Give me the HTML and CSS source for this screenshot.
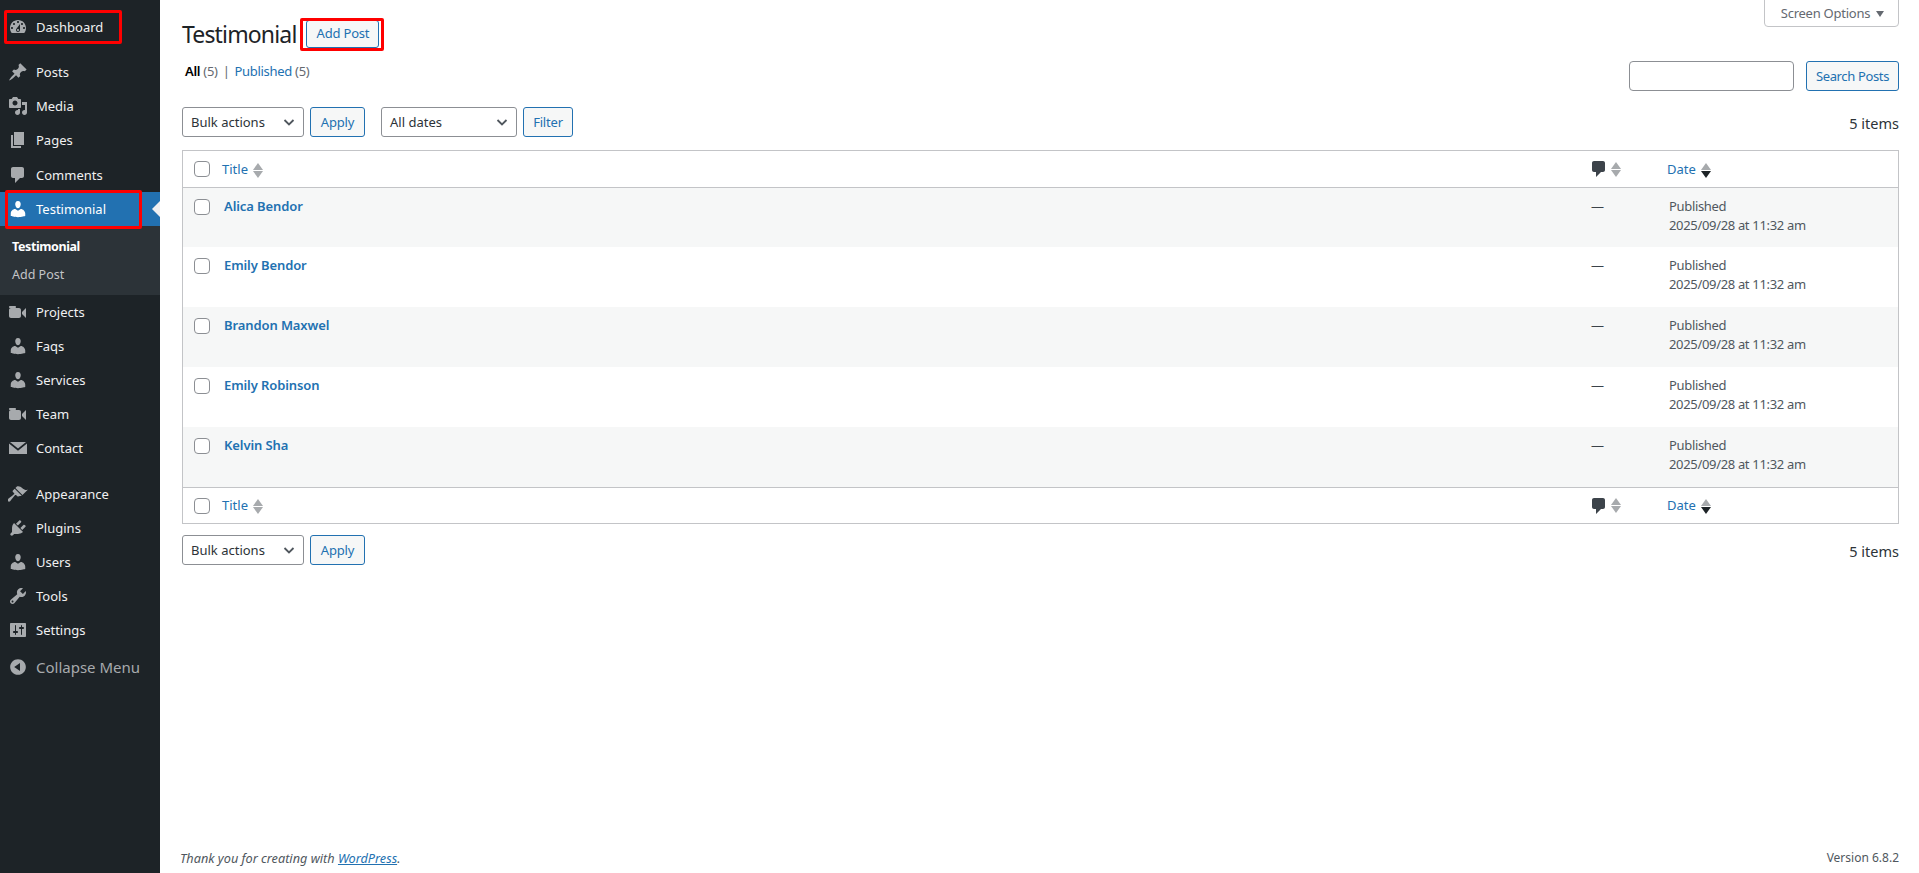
FILE: index.html
```html
<!DOCTYPE html>
<html lang="en">
<head>
  <meta charset="UTF-8">
  <title>Testimonial</title>
  <link rel="stylesheet" href="styles.css">
</head>
<body>

  <svg class="sprites" xmlns="http://www.w3.org/2000/svg">
    <symbol id="i-dashboard" viewBox="0 0 20 20"><path fill-rule="evenodd" d="M3.76 16h12.48c1.1-1.37 1.76-3.11 1.76-5 0-4.42-3.58-8-8-8s-8 3.58-8 8c0 1.89.66 3.63 1.76 5zM10 4c.55 0 1 .45 1 1s-.45 1-1 1-1-.45-1-1 .45-1 1-1zM6 6c.55 0 1 .45 1 1s-.45 1-1 1-1-.45-1-1 .45-1 1-1zm8 0c.55 0 1 .45 1 1s-.45 1-1 1-1-.45-1-1 .45-1 1-1zm-5.37 5.55L12 7v6c0 1.1-.9 2-2 2s-2-.9-2-2c0-.57.24-1.08.63-1.45zM4 10c.55 0 1 .45 1 1s-.45 1-1 1-1-.45-1-1 .45-1 1-1zm12 0c.55 0 1 .45 1 1s-.45 1-1 1-1-.45-1-1 .45-1 1-1zm-5 3c0-.55-.45-1-1-1s-1 .45-1 1 .45 1 1 1 1-.45 1-1z"/></symbol>
    <symbol id="i-post" viewBox="0 0 20 20"><path d="M10.44 3.02l1.82-1.82 6.36 6.35-1.83 1.82c-1.05-.68-2.48-.57-3.41.36l-.75.75c-.92.93-1.04 2.35-.35 3.41l-1.83 1.82-2.41-2.41-2.8 2.79c-.42.42-3.38 2.71-3.8 2.29s1.86-3.39 2.28-3.81l2.79-2.79L4.1 9.36l1.83-1.82c1.05.69 2.48.57 3.4-.36l.75-.75c.93-.92 1.05-2.35.36-3.41z"/></symbol>
    <symbol id="i-media" viewBox="0 0 20 20"><path fill-rule="evenodd" d="M13 11V4c0-.55-.45-1-1-1h-1.67L9 1H5L3.67 3H2c-.55 0-1 .45-1 1v7c0 .55.45 1 1 1h10c.55 0 1-.45 1-1zM7 4.5c1.38 0 2.5 1.12 2.5 2.5S8.38 9.5 7 9.5 4.5 8.38 4.5 7 5.62 4.5 7 4.5zM14 6h5v10.5c0 1.38-1.12 2.5-2.5 2.5S14 17.88 14 16.5s1.12-2.5 2.5-2.5c.17 0 .34.02.5.05V9h-3V6zm-4 8.05V13h2v3.5c0 1.38-1.12 2.5-2.5 2.5S7 17.88 7 16.5 8.12 14 9.5 14c.17 0 .34.02.5.05z"/></symbol>
    <symbol id="i-page" viewBox="0 0 20 20"><path d="M6 15V2h10v13H6zm-1 1h8v2H3V5h2v11z"/></symbol>
    <symbol id="i-comment" viewBox="0 0 20 20"><path d="M5 2h9c1.1 0 2 .9 2 2v7c0 1.1-.9 2-2 2h-2l-5 5v-5H5c-1.1 0-2-.9-2-2V4c0-1.1.9-2 2-2z"/></symbol>
    <symbol id="i-user" viewBox="0 0 20 20"><path d="M10 9.25c-2.27 0-2.73-3.44-2.73-3.44C7 4.02 7.82 2 9.97 2c2.16 0 2.98 2.02 2.71 3.81 0 0-.41 3.44-2.68 3.44zm0 2.57L12.72 10c2.39 0 4.52 2.33 4.52 4.53v2.49s-3.65 1.13-7.24 1.13c-3.65 0-7.24-1.13-7.24-1.13v-2.49c0-2.25 1.94-4.48 4.47-4.48z"/></symbol>
    <symbol id="i-video" viewBox="0 0 20 20"><path d="M8 5c0-.55-.45-1-1-1H2c-.55 0-1 .45-1 1 0 .57.49 1 1 1h5c.55 0 1-.45 1-1zm6 5l4-4v10l-4-4v-2zm-1 4V8c0-1.1-.9-2-2-2H3c-1.1 0-2 .9-2 2v6c0 1.1.9 2 2 2h8c1.1 0 2-.9 2-2z"/></symbol>
    <symbol id="i-email" viewBox="0 0 20 20"><path d="M2 4h16l-8 6.5zM1 5.500l9 7.2 9-7.2V16H1z"/></symbol>
    <symbol id="i-appearance" viewBox="0 0 20 20"><path d="M14.48 11.06L7.41 3.99l1.5-1.5c.5-.56 2.3-.47 3.51.32 1.21.8 1.43 1.28 2.91 2.1 1.18.64 2.45 1.26 4.45.85zm-.71.71L6.7 4.7 4.93 6.47c-.39.39-.39 1.02 0 1.41l1.06 1.06c.39.39.39 1.03 0 1.42-.6.6-6.01 4.79-6.01 4.79-.59.59-.59 1.54 0 2.12.59.59 1.54.59 2.12 0 0 0 4.19-5.41 4.79-6.01.39-.39 1.03-.39 1.42 0l1.06 1.06c.39.39 1.02.39 1.41 0z"/></symbol>
    <symbol id="i-plugin" viewBox="0 0 20 20"><path d="M13.11 4.36L9.87 7.6 8 5.73l3.24-3.24c.35-.34 1.05-.2 1.56.32.52.51.66 1.21.31 1.55zm-8 1.77l.91-1.12 9.01 9.01-1.19.84c-.71.71-2.63 1.16-3.82 1.16H6.14L4.9 17.26c-.59.59-1.54.59-2.12 0-.59-.58-.59-1.53 0-2.12l1.24-1.24v-3.88c0-1.13.4-3.19 1.09-3.89zm7.26 3.97l3.24-3.24c.34-.35 1.04-.21 1.55.31.52.51.66 1.21.31 1.55l-3.24 3.25z"/></symbol>
    <symbol id="i-tools" viewBox="0 0 20 20"><path fill-rule="evenodd" d="M16.68 9.77c-1.34 1.34-3.3 1.67-4.95.99l-5.41 6.52c-.99.99-2.59.99-3.58 0s-.99-2.59 0-3.57l6.52-5.42c-.68-1.65-.35-3.61.99-4.95 1.28-1.28 3.12-1.62 4.72-1.06l-2.89 2.89 2.82 2.82 2.86-2.87c.53 1.58.18 3.39-1.08 4.65zM3.81 16.21c.4.39 1.04.39 1.43 0 .4-.4.4-1.04 0-1.43-.39-.4-1.03-.4-1.43 0-.39.39-.39 1.03 0 1.43z"/></symbol>
    <symbol id="i-settings" viewBox="0 0 20 20"><path fill-rule="evenodd" d="M18 16V4c0-.55-.45-1-1-1H3c-.55 0-1 .45-1 1v12c0 .55.45 1 1 1h14c.55 0 1-.45 1-1zM8 11h1c.55 0 1 .45 1 1s-.45 1-1 1H8v1.5c0 .28-.22.5-.5.5s-.5-.22-.5-.5V13H6c-.55 0-1-.45-1-1s.45-1 1-1h1V5.5c0-.28.22-.5.5-.5s.5.22.5.5V11zm5-2h-1c-.55 0-1-.45-1-1s.45-1 1-1h1V5.500c0-.28.22-.5.5-.5s.5.22.5.5V7h1c.55 0 1 .45 1 1s-.45 1-1 1h-1v5.500c0 .28-.22.5-.5.5s-.5-.22-.5-.5V9z"/></symbol>
    <symbol id="i-collapse" viewBox="0 0 20 20"><path fill-rule="evenodd" d="M10 2.16c4.33 0 7.84 3.51 7.84 7.84s-3.51 7.84-7.84 7.84S2.16 14.33 2.16 10 5.71 2.16 10 2.16zm2 11.72V6.12L6.18 9.97z"/></symbol>
  </svg>

  <div class="wrap">
    <nav class="sidebar">
      <div class="red-box red-dash"></div>
      <div class="red-box red-test"></div>
      <ul class="menu">
        <li class="item"><svg class="icon"><use href="#i-dashboard"/></svg>Dashboard</li>
        <li class="sep"></li>
        <li class="item"><svg class="icon"><use href="#i-post"/></svg>Posts</li>
        <li class="item"><svg class="icon"><use href="#i-media"/></svg>Media</li>
        <li class="item"><svg class="icon"><use href="#i-page"/></svg>Pages</li>
        <li class="item"><svg class="icon"><use href="#i-comment"/></svg>Comments</li>
        <li class="item active"><svg class="icon"><use href="#i-user"/></svg>Testimonial</li>
        <li class="submenu">
          <div class="sub-item current">Testimonial</div>
          <div class="sub-item">Add Post</div>
        </li>
        <li class="item"><svg class="icon"><use href="#i-video"/></svg>Projects</li>
        <li class="item"><svg class="icon"><use href="#i-user"/></svg>Faqs</li>
        <li class="item"><svg class="icon"><use href="#i-user"/></svg>Services</li>
        <li class="item"><svg class="icon"><use href="#i-video"/></svg>Team</li>
        <li class="item"><svg class="icon"><use href="#i-email"/></svg>Contact</li>
        <li class="sep"></li>
        <li class="item"><svg class="icon"><use href="#i-appearance"/></svg>Appearance</li>
        <li class="item"><svg class="icon"><use href="#i-plugin"/></svg>Plugins</li>
        <li class="item"><svg class="icon"><use href="#i-user"/></svg>Users</li>
        <li class="item"><svg class="icon"><use href="#i-tools"/></svg>Tools</li>
        <li class="item"><svg class="icon"><use href="#i-settings"/></svg>Settings</li>
        <li class="item collapse"><svg class="icon"><use href="#i-collapse"/></svg>Collapse Menu</li>
      </ul>
    </nav>

    <main class="content">
      <button class="screen-options">Screen Options<span class="down"></span></button>

      <div class="heading">
        <h1>Testimonial</h1>
        <div class="add-wrap">
          <button class="btn add-btn">Add Post</button>
          <div class="red-box red-add"></div>
        </div>
      </div>

      <div class="filter-row">
        <ul class="views">
          <li><b>All</b> <span class="count">(5)</span></li>
          <li class="bar">|</li>
          <li><a href="#">Published</a> <span class="count">(5)</span></li>
        </ul>
        <div class="search">
          <input type="text" class="search-input">
          <button class="btn search-btn">Search Posts</button>
        </div>
      </div>

      <div class="tablenav top">
        <div class="select select-bulk">Bulk actions<svg class="chev" viewBox="0 0 12 8"><path d="M1.5 2l4.5 4.5L10.500 2"/></svg></div>
        <button class="btn apply">Apply</button>
        <div class="select select-dates">All dates<svg class="chev" viewBox="0 0 12 8"><path d="M1.5 2l4.5 4.5L10.500 2"/></svg></div>
        <button class="btn filter">Filter</button>
        <span class="items">5 items</span>
      </div>

      <table class="posts">
        <colgroup>
          <col class="col-check"><col><col class="col-comments"><col class="col-date">
        </colgroup>
        <thead>
          <tr>
            <th><span class="check"></span></th>
            <th class="title-head"><a href="#">Title</a><span class="sort"><i class="up"></i><i class="dn"></i></span></th>
            <th><svg class="comment-head"><use href="#i-comment"/></svg><span class="sort"><i class="up"></i><i class="dn"></i></span></th>
            <th class="date-head"><a href="#">Date</a><span class="sort"><i class="up"></i><i class="dn dark"></i></span></th>
          </tr>
        </thead>
        <tbody>
          <tr>
            <td><span class="check"></span></td>
            <td class="name"><a href="#">Alica Bendor</a></td>
            <td class="dash">—</td>
            <td class="date">Published<br>2025/09/28 at 11:32 am</td>
          </tr>
          <tr>
            <td><span class="check"></span></td>
            <td class="name"><a href="#">Emily Bendor</a></td>
            <td class="dash">—</td>
            <td class="date">Published<br>2025/09/28 at 11:32 am</td>
          </tr>
          <tr>
            <td><span class="check"></span></td>
            <td class="name"><a href="#">Brandon Maxwel</a></td>
            <td class="dash">—</td>
            <td class="date">Published<br>2025/09/28 at 11:32 am</td>
          </tr>
          <tr>
            <td><span class="check"></span></td>
            <td class="name"><a href="#">Emily Robinson</a></td>
            <td class="dash">—</td>
            <td class="date">Published<br>2025/09/28 at 11:32 am</td>
          </tr>
          <tr>
            <td><span class="check"></span></td>
            <td class="name"><a href="#">Kelvin Sha</a></td>
            <td class="dash">—</td>
            <td class="date">Published<br>2025/09/28 at 11:32 am</td>
          </tr>
        </tbody>
        <tfoot>
          <tr>
            <th><span class="check"></span></th>
            <th class="title-head"><a href="#">Title</a><span class="sort"><i class="up"></i><i class="dn"></i></span></th>
            <th><svg class="comment-head"><use href="#i-comment"/></svg><span class="sort"><i class="up"></i><i class="dn"></i></span></th>
            <th class="date-head"><a href="#">Date</a><span class="sort"><i class="up"></i><i class="dn dark"></i></span></th>
          </tr>
        </tfoot>
      </table>

      <div class="tablenav bottom">
        <div class="select select-bulk">Bulk actions<svg class="chev" viewBox="0 0 12 8"><path d="M1.5 2l4.5 4.5L10.500 2"/></svg></div>
        <button class="btn apply">Apply</button>
        <span class="items">5 items</span>
      </div>

      <footer class="page-footer">
        <em>Thank you for creating with <a href="#">WordPress</a>.</em>
        <span>Version 6.8.2</span>
      </footer>
    </main>
  </div>

</body>
</html>
```

FILE: styles.css
```css
* {
  box-sizing: border-box;
}
body {
  margin: 0;
  background: #fff;
  color: #3c434a;
  font-family: "Noto Sans", "Open Sans", sans-serif;
  font-size: 13px;
  line-height: 1.4;
}
a {
  color: #2271b1;
  text-decoration: none;
}
.sprites {
  display: none;
}
.wrap {
  display: flex;
  min-height: 873px;
}

/* sidebar */
.sidebar {
  position: relative;
  width: 160px;
  flex: none;
  background: #1d2327;
  padding-top: 10px;
}
.menu {
  list-style: none;
  margin: 0;
  padding: 0;
}
.item {
  position: relative;
  display: flex;
  align-items: center;
  height: 34.15px;
  padding-left: 8px;
  color: #f0f0f1;
  white-space: nowrap;
}
.icon {
  width: 20px;
  height: 20px;
  margin-right: 8px;
  fill: #a7aaad;
  flex: none;
}
.sep {
  height: 11px;
}
.item.active {
  background: #2271b1;
  color: #fff;
}
.item.active .icon {
  fill: #fff;
}
.item.active::after {
  content: "";
  position: absolute;
  right: 0;
  top: 9px;
  border: 8px solid transparent;
  border-right-color: #f0f0f1;
  border-left-width: 0;
}
.submenu {
  background: #2c3338;
  padding: 7px 0 7px;
  height: 69px;
}
.sub-item {
  height: 28px;
  line-height: 28px;
  padding-left: 12px;
  color: #c3c4c7;
  font-size: 12.5px;
}
.sub-item.current {
  color: #fff;
  font-weight: 700;
  letter-spacing: -0.4px;
}
.collapse {
  margin-top: 3px;
  color: #a7aaad;
  font-size: 15px;
}

/* red marks drawn over the screenshot */
.red-box {
  position: absolute;
  border: 3px solid #f00;
  border-radius: 2px;
  pointer-events: none;
}
.red-dash {
  left: 4px;
  top: 10px;
  width: 118px;
  height: 34px;
}
.red-test {
  left: 5px;
  top: 190px;
  width: 137px;
  height: 39px;
  z-index: 1;
}
.red-add {
  left: -6px;
  top: -2px;
  width: 84px;
  height: 33px;
}

/* main */
.content {
  position: relative;
  flex: 1;
  min-width: 0;
  display: flex;
  flex-direction: column;
  padding: 0 20px 0 22px;
}
.screen-options {
  position: absolute;
  top: -1px;
  right: 20px;
  width: 135px;
  height: 28px;
  background: #fff;
  border: 1px solid #c3c4c7;
  border-radius: 0 0 4px 4px;
  color: #646970;
  font: inherit;
  letter-spacing: -0.25px;
  padding: 0 0 0 2px;
}
.down {
  display: inline-block;
  margin-left: 6px;
  border: 4px solid transparent;
  border-top: 6px solid #646970;
  border-bottom: 0;
  vertical-align: 1px;
}
.heading {
  display: flex;
  align-items: center;
  height: 28px;
  margin-top: 20px;
}
h1 {
  margin: 0;
  font-size: 23px;
  font-weight: 400;
  letter-spacing: -0.85px;
  color: #1d2327;
  line-height: 28px;
}
.add-wrap {
  position: relative;
  margin-left: 10px;
}
.btn {
  height: 30px;
  padding: 0 10px;
  background: #f6f7f7;
  border: 1px solid #2271b1;
  border-radius: 3px;
  color: #2271b1;
  font: inherit;
  letter-spacing: -0.2px;
}
.add-btn {
  display: block;
  height: 28px;
  width: 73px;
  padding: 0 0 1px;
}
.filter-row {
  display: flex;
  justify-content: space-between;
  margin-top: 13px;
}
.views {
  display: flex;
  gap: 5px;
  list-style: none;
  margin: 0;
  padding: 0 0 0 3px;
  color: #646970;
  height: 20px;
  line-height: 20px;
  letter-spacing: -0.3px;
}
.views b {
  color: #000;
  font-weight: 600;
}
.search {
  display: flex;
  gap: 12px;
}
.search-input {
  width: 165px;
  height: 30px;
  border: 1px solid #8c8f94;
  border-radius: 4px;
  background: #fff;
}
.search-btn {
  width: 93px;
  padding: 0;
  letter-spacing: -0.35px;
}
.tablenav {
  display: flex;
  align-items: center;
  gap: 6px;
  height: 30px;
}
.tablenav.top {
  margin-top: 16px;
}
.tablenav.bottom {
  margin-top: 11px;
}
.select {
  display: flex;
  align-items: center;
  justify-content: space-between;
  height: 30px;
  padding: 0 8px;
  border: 1px solid #8c8f94;
  border-radius: 3px;
  background: #fff;
  color: #2c3338;
}
.select-bulk {
  width: 122px;
}
.select-dates {
  width: 136px;
}
.chev {
  width: 12px;
  height: 8px;
  fill: none;
  stroke: #50575e;
  stroke-width: 1.8;
}
.apply {
  width: 55px;
  padding: 0;
  margin-right: 10px;
}
.filter {
  width: 50px;
  padding: 0;
}
.items {
  margin-left: auto;
  padding-top: 3px;
  color: #2c3338;
  font-size: 14.5px;
}

/* table */
.posts {
  width: 100%;
  margin-top: 13px;
  border-collapse: separate;
  border-spacing: 0;
  table-layout: fixed;
  border: 1px solid #c3c4c7;
  background: #fff;
}
.col-check {
  width: 39px;
}
.col-comments {
  width: 76px;
}
.col-date {
  width: 231px;
}
.posts th {
  height: 36px;
  padding: 0;
  font-weight: 400;
  text-align: left;
  vertical-align: middle;
  white-space: nowrap;
}
.posts thead th {
  border-bottom: 1px solid #c3c4c7;
  height: 37px;
}
.posts tfoot th {
  border-top: 1px solid #c3c4c7;
  height: 36px;
}
.posts td {
  height: 60px;
  padding: 9px 0 0;
  vertical-align: top;
}
.posts tbody tr:first-child td {
  height: 59px;
}
.posts tbody tr:nth-child(odd) td {
  background: #f6f7f7;
}
.check {
  display: block;
  width: 16px;
  height: 16px;
  margin-left: 11px;
  border: 1px solid #8c8f94;
  border-radius: 4px;
  background: #fff;
}
.posts td .check {
  margin-top: 2px;
}
.sort {
  display: inline-flex;
  flex-direction: column;
  gap: 1px;
  margin-left: 5px;
  vertical-align: middle;
}
.sort i {
  display: block;
  border: 5px solid transparent;
  border-top: 0;
  border-bottom: 7px solid #a7aaad;
}
.sort i.dn {
  border-bottom: 0;
  border-top: 7px solid #a7aaad;
}
.sort i.dn.dark {
  border-top-color: #1d2327;
}
.comment-head {
  width: 20px;
  height: 20px;
  fill: #3c434a;
  vertical-align: middle;
  margin-left: -2px;
}
.comment-head + .sort {
  margin-left: 2px;
}
.name {
  font-weight: 600;
  letter-spacing: -0.1px;
  padding-left: 2px !important;
}
.dash {
  color: #3c434a;
}
.date {
  color: #50575e;
  line-height: 19px;
  letter-spacing: -0.33px;
  padding-left: 2px !important;
}

/* footer */
.page-footer {
  display: flex;
  justify-content: space-between;
  margin-top: auto;
  margin-left: -2px;
  height: 23px;
  color: #50575e;
  font-size: 12px;
}
.page-footer em {
  font-size: 12.7px;
}
.page-footer a {
  text-decoration: underline;
}
```
